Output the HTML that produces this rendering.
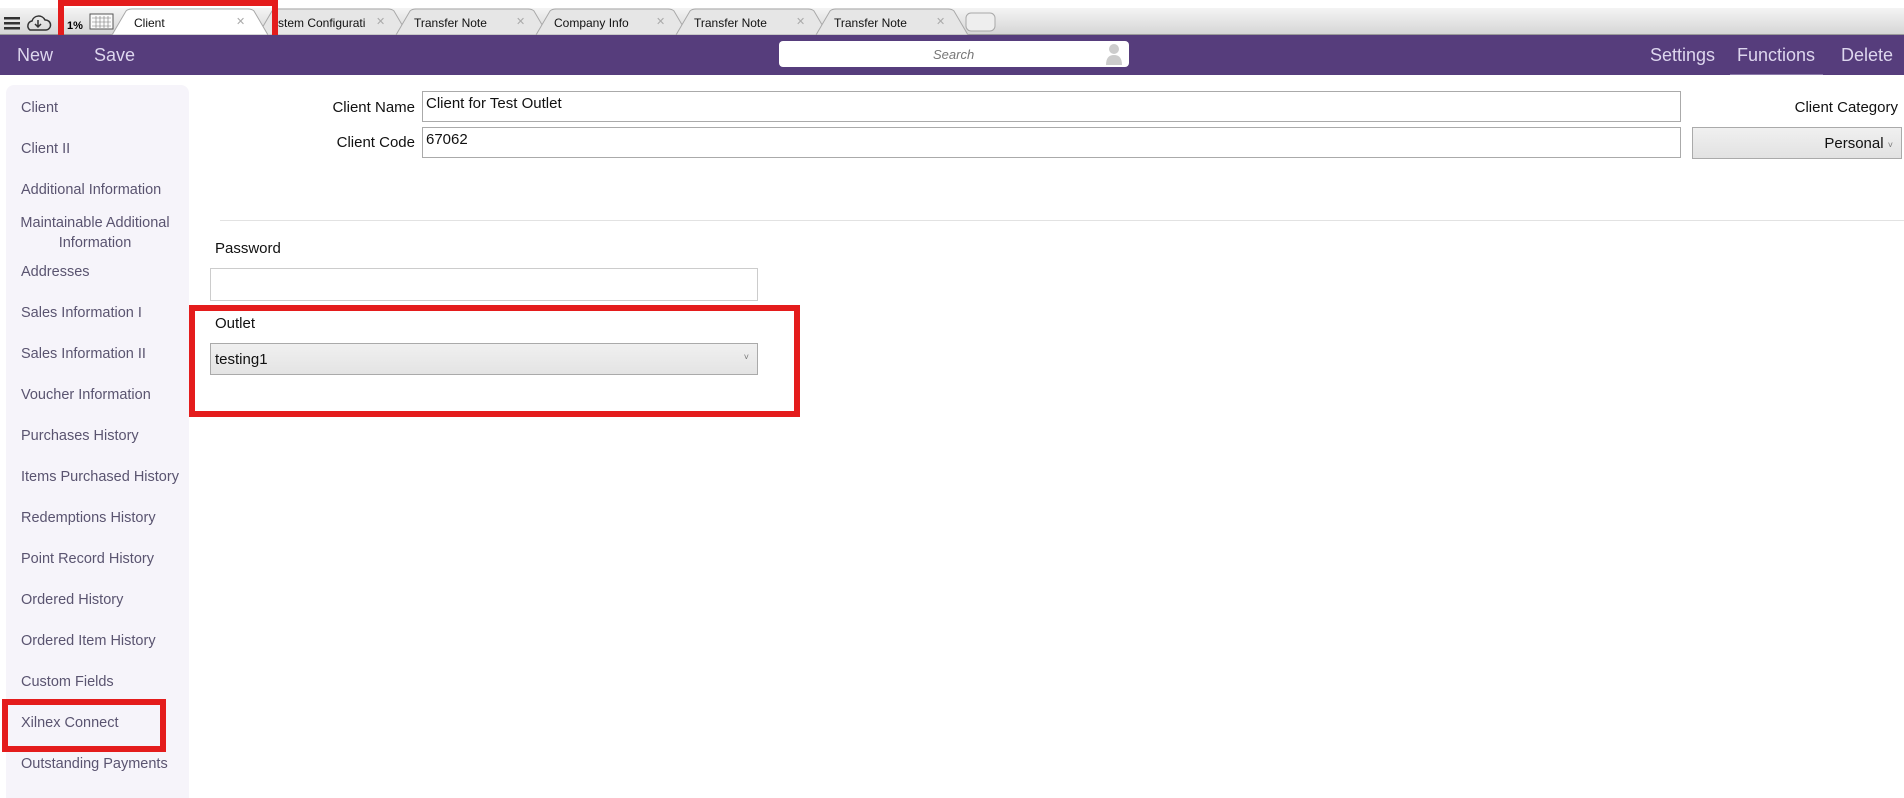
<!DOCTYPE html>
<html><head><meta charset="utf-8"><style>
*{margin:0;padding:0;box-sizing:border-box}
body{width:1904px;height:798px;overflow:hidden;background:#fff;font-family:"Liberation Sans",sans-serif;position:relative}
.a{position:absolute;white-space:nowrap}
.tabbar{left:0;top:8px;width:1904px;height:27px;background:linear-gradient(#f4f4f4,#d6d6d6);border-bottom:1px solid #9a9a9a}
.purple{left:0;top:35px;width:1904px;height:40px;background:#563d7c}
.tt{font-size:12px;color:#111;top:16px}
.tx{font-size:11px;color:#aaa;top:15px}
.nav{color:#ddd6ee;font-size:18px;top:45px}
.side{left:6px;top:85px;width:183px;height:713px;background:#f6f4fa;border-radius:8px 8px 0 0}
.si{left:21px;font-size:14.5px;color:#5a5470}
.lbl{font-size:15px;color:#111}
.inp{border:1px solid #aaa;background:#fff;font-size:15px;padding:3px 3px;color:#111}
.red{border:6px solid #e41c1c}
</style></head><body>
<div class="a tabbar"></div>
<svg class="a" style="left:0;top:8px" width="1000" height="27">
<g fill="#e6e6e6" stroke="#a8a8a8" stroke-width="1">
<path d="M258 27 L272 3 Q274 1 278 1 L388 1 Q392 1 394 3 L408 27Z"/>
<path d="M396 27 L410 3 Q412 1 416 1 L528 1 Q532 1 534 3 L548 27Z"/>
<path d="M536 27 L550 3 Q552 1 556 1 L668 1 Q672 1 674 3 L688 27Z"/>
<path d="M676 27 L690 3 Q692 1 696 1 L808 1 Q812 1 814 3 L828 27Z"/>
<path d="M816 27 L830 3 Q832 1 836 1 L948 1 Q952 1 954 3 L968 27Z"/>
<rect x="966" y="5" width="29" height="18" rx="5" fill="#eee"/>
<path d="M112 27 L126 3 Q128 1 132 1 L248 1 Q252 1 254 3 L268 27Z" fill="#fff"/>
</g>
<g fill="#333"><rect x="4" y="9" width="16" height="2.5"/><rect x="4" y="14" width="16" height="2.5"/><rect x="4" y="19" width="16" height="2.5"/></g>
<path d="M30 22 h16 a5 5 0 0 0 -1 -10 a7 7 0 0 0 -13 1 a5 5 0 0 0 -2 9z" fill="none" stroke="#333" stroke-width="1.5"/>
<path d="M38 12 v7 M35 16 l3 3 l3 -3" fill="none" stroke="#333" stroke-width="1.5"/>
<text x="67" y="21" font-size="11" font-weight="bold" font-family="Liberation Sans">1%</text>
<rect x="90" y="6" width="23" height="15" fill="#fafafa" stroke="#555"/>
<path d="M92 10h19M92 14h19M92 18h19M96 8v12M100 8v12M104 8v12M108 8v12" stroke="#777" stroke-width="0.6"/>
</svg>
<div class="a tt" style="left:134px">Client</div>
<div class="a tt" style="left:272px">ystem Configurati</div>
<div class="a tt" style="left:414px">Transfer Note</div>
<div class="a tt" style="left:554px">Company Info</div>
<div class="a tt" style="left:694px">Transfer Note</div>
<div class="a tt" style="left:834px">Transfer Note</div>
<div class="a tx" style="left:236px">✕</div><div class="a tx" style="left:376px">✕</div><div class="a tx" style="left:516px">✕</div><div class="a tx" style="left:656px">✕</div><div class="a tx" style="left:796px">✕</div><div class="a tx" style="left:936px">✕</div>
<div class="a red" style="left:58px;top:0;width:220px;height:50px"></div>
<div class="a purple"></div>
<div class="a nav" style="left:17px">New</div>
<div class="a nav" style="left:94px">Save</div>
<div class="a" style="left:779px;top:41px;width:350px;height:26px;background:#fff;border-radius:4px"></div>
<div class="a" style="left:933px;top:47px;font-size:13px;font-style:italic;color:#777">Search</div>
<svg class="a" style="left:1104px;top:41px" width="20" height="26"><circle cx="10" cy="8" r="5" fill="#ccc"/><path d="M2 24 Q2 14 10 14 Q18 14 18 24Z" fill="#ccc"/></svg>
<div class="a nav" style="left:1650px">Settings</div>
<div class="a nav" style="left:1737px">Functions</div>
<div class="a nav" style="left:1841px">Delete</div>
<div class="a" style="left:1730px;top:74px;width:93px;height:1px;background:#8a78a8"></div>
<div class="a side"></div>
<div class="a si" style="top:100px">Client</div>
<div class="a si" style="top:141px">Client II</div>
<div class="a si" style="top:182px">Additional Information</div>
<div class="a si" style="top:213px;text-align:center;width:160px;line-height:20px;left:15px">Maintainable Additional<br>Information</div>
<div class="a si" style="top:264px">Addresses</div>
<div class="a si" style="top:305px">Sales Information I</div>
<div class="a si" style="top:346px">Sales Information II</div>
<div class="a si" style="top:387px">Voucher Information</div>
<div class="a si" style="top:428px">Purchases History</div>
<div class="a si" style="top:469px">Items Purchased History</div>
<div class="a si" style="top:510px">Redemptions History</div>
<div class="a si" style="top:551px">Point Record History</div>
<div class="a si" style="top:592px">Ordered History</div>
<div class="a si" style="top:633px">Ordered Item History</div>
<div class="a si" style="top:674px">Custom Fields</div>
<div class="a si" style="top:715px">Xilnex Connect</div>
<div class="a si" style="top:756px">Outstanding Payments</div>
<div class="a red" style="left:2px;top:699px;width:164px;height:53px"></div>
<div class="a lbl" style="left:310px;top:99px;width:105px;text-align:right">Client Name</div>
<div class="a inp" style="left:422px;top:91px;width:1259px;height:31px;padding-top:3px">Client for Test Outlet</div>
<div class="a lbl" style="left:310px;top:134px;width:105px;text-align:right">Client Code</div>
<div class="a inp" style="left:422px;top:127px;width:1259px;height:31px">67062</div>
<div class="a lbl" style="left:1780px;top:99px;width:118px;text-align:right">Client Category</div>
<div class="a" style="left:1692px;top:127px;width:210px;height:32px;border:1px solid #aaa;background:linear-gradient(#f0f0f0,#e2e2e2);font-size:15px;text-align:right;padding:7px 8px 0 0;color:#111">Personal <span style="font-size:9px;color:#777">˅</span></div>
<div class="a" style="left:220px;top:220px;width:1684px;height:1px;background:#e2e2e2"></div>
<div class="a lbl" style="left:215px;top:240px">Password</div>
<div class="a" style="left:210px;top:268px;width:548px;height:33px;border:1px solid #ccc;background:#fff"></div>
<div class="a red" style="left:189px;top:305px;width:611px;height:112px"></div>
<div class="a lbl" style="left:215px;top:315px">Outlet</div>
<div class="a" style="left:210px;top:343px;width:548px;height:32px;border:1px solid #aaa;background:linear-gradient(#f0f0f0,#e4e4e4);font-size:15px;padding:7px 0 0 4px;color:#111">testing1<span style="position:absolute;right:8px;top:8px;font-size:9px;color:#777">˅</span></div>
</body></html>
